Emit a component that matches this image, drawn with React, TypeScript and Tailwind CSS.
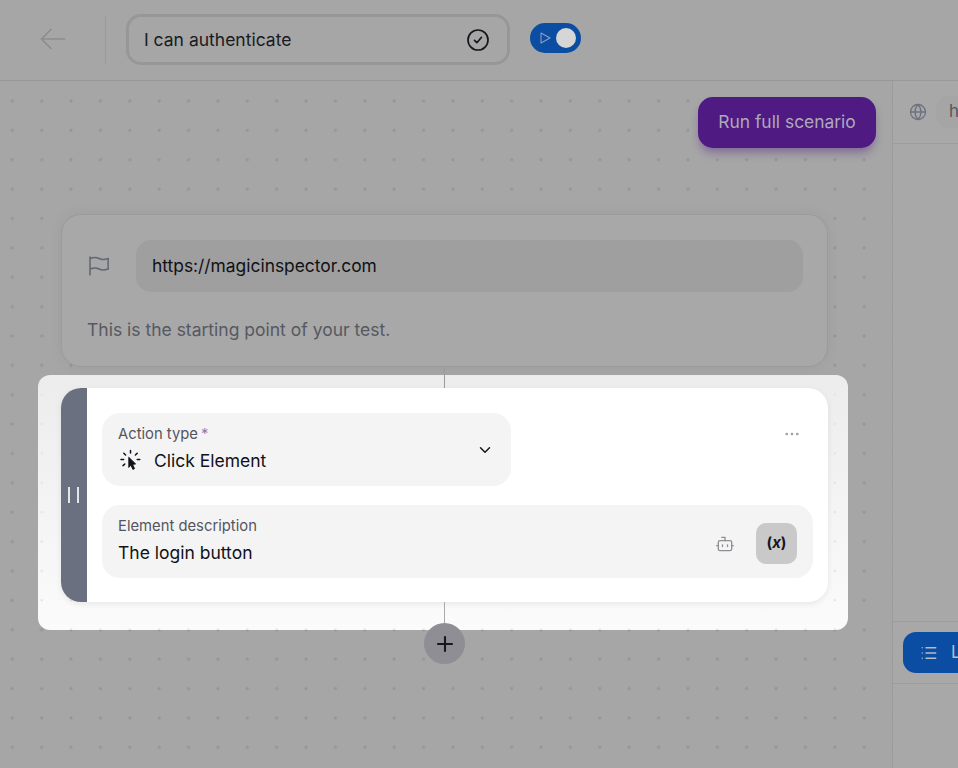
import { Bot, ChevronDown, Ellipsis, Globe, List, Plus } from 'lucide-react';
import { HiOutlineFlag } from 'react-icons/hi2';

// no icon in the packages has this exact cursor with rays
function ClickIcon() {
  return (
    <svg width="22" height="24" viewBox="0 0 22 24" fill="none" stroke="#111118" strokeWidth="1.5" strokeLinecap="round" className="shrink-0 ml-[2px]">
      <path d="M10.5 1.5v2.6M3.8 4.2l1.8 1.8M17.2 4.2l-1.8 1.8M1 10.5h2.6M4.8 15l-1.8 1.6M17.2 10.5h2.6" />
      <path d="M9 8.5l6.6 6.4-3 .5 1.9 4.2-1.6.8-2-4.3-1.9 2.1z" fill="#111118" strokeWidth="0.9" strokeLinejoin="round" />
    </svg>
  );
}

function CheckCircle() {
  return (
    <svg width="24" height="24" viewBox="0 0 24 24" fill="none" stroke="#17171c" strokeWidth="1.7" strokeLinecap="round" strokeLinejoin="round">
      <circle cx="12" cy="12" r="10" />
      <path d="M8.5 12.3l2.4 2.4 4.6-5.4" />
    </svg>
  );
}

export default function App() {
  return (
    <div className="h-[768px] w-[958px] overflow-hidden bg-[#a6a6a6] font-['Inter',sans-serif] flex flex-col">
      {/* Top bar */}
      <header className="h-[81px] shrink-0 flex items-center border-b border-[#97979c]">
        <div className="w-[106px] h-[50px] mb-[1px] flex items-center border-r border-[#9a9a9e] pl-[40px]">
          <svg width="26" height="22" viewBox="0 0 26 22" fill="none" stroke="#8c8c92" strokeWidth="1.7" strokeLinecap="round" strokeLinejoin="round" className="-mt-[1px]">
            <path d="M1.5 11h23M11 1.5L1.5 11l9.5 9.5" />
          </svg>
        </div>
        <div className="ml-[20px] mb-[1px] w-[384px] h-[51px] rounded-[15px] border-[3px] border-[#979797] flex items-center justify-between pl-[15px] pr-[17px]">
          <span className="pt-[2px] text-[17.5px] text-[#1a1a20]">I can authenticate</span>
          <CheckCircle />
        </div>
        <div className="ml-[20px] mb-[4px] w-[51px] h-[30px] rounded-full bg-[#0b4da2] flex items-center justify-between pl-[9px] pr-[5px]">
          <svg width="13" height="14" viewBox="0 0 13 14" fill="none" stroke="#8d9cc0" strokeWidth="1.1" strokeLinejoin="round">
            <path d="M2 2l9 5-9 5z" />
          </svg>
          <div className="w-[20px] h-[20px] rounded-full bg-[#d6d6d6]" />
        </div>
      </header>

      <div className="flex-1 flex min-h-0">
        {/* Canvas */}
        <main className="w-[892px] shrink-0 flex flex-col bg-[radial-gradient(circle,#95959a_1.4px,transparent_1.7px)] bg-[size:29.38px_29.38px] bg-[position:-2.4px_5.3px]">
          <button className="self-end mt-[16px] mr-[16px] w-[178px] h-[51px] rounded-[15px] bg-[#4f1a82] text-[#aea8b9] text-[17.4px] shadow-[0_6px_10px_-2px_rgba(79,26,130,0.45)]">
            Run full scenario
          </button>

          <section className="relative mt-[66px] ml-[61px] w-[767px] h-[153px] rounded-[20px] bg-[#a8a8a8] border border-[#9b9b9b] shadow-[0_0_14px_rgba(0,0,0,0.06)] px-[25px] pt-[25px]">
            <div className="flex items-center gap-[25px]">
              <HiOutlineFlag size={24} className="text-[#62666f] shrink-0" />
              <div className="w-[667px] h-[52px] shrink-0 rounded-[15px] bg-[#9f9f9f] flex items-center pl-[16px] text-[17.4px] text-[#111116]">
                https://magicinspector.com
              </div>
            </div>
            <p className="mt-[26px] text-[17.5px] leading-[24px] text-[#565862]">This is the starting point of your test.</p>
          </section>

          {/* Highlighted step */}
          <div className="relative mt-[8px] ml-[38px] w-[810px] h-[255px] rounded-[12px] bg-[radial-gradient(circle,#e4e4e4_1.3px,transparent_1.6px),linear-gradient(to_bottom,#ececec,#fbfbfb)] bg-[size:29.38px_29.38px,100%_100%] bg-[position:-11px_4.9px,0_0] pt-[13px] pl-[23px]">
            <div className="absolute left-[406px] -top-[8px] w-px h-[21px] bg-[#9a9a9a]" />
            <div className="absolute left-[406px] top-[227px] w-px h-[22px] bg-[#a9a9a9]" />
            <div className="w-[767px] h-[214px] rounded-[20px] bg-white shadow-[0_2px_6px_rgba(0,0,0,0.08)] flex overflow-hidden">
              <div className="w-[26px] shrink-0 bg-[#6b7080] flex items-center justify-center gap-[7px] pb-[1px] pr-[1px]">
                <div className="w-[2px] h-[16px] bg-[#e4e5e9]" />
                <div className="w-[2px] h-[16px] bg-[#e4e5e9]" />
              </div>
              <div className="flex-1 pl-[15px] pr-[15px] pt-[25px]">
                <div className="flex items-start justify-between">
                  <div className="w-[409px] h-[73px] rounded-[18px] bg-[#f4f4f5] flex items-center justify-between pl-[16px] pr-[17px]">
                    <div className="mb-[2px]">
                      <div className="text-[14.8px] leading-[20px] text-[#54545e]">
                        Action type<span className="ml-[3px] text-[#9a7bb5]">*</span>
                      </div>
                      <div className="flex items-center gap-[12px] mt-[4px] text-[17.5px] leading-[26px] text-[#111116]">
                        <ClickIcon />
                        Click Element
                      </div>
                    </div>
                    <ChevronDown size={18} strokeWidth={2} className="text-[#17171c]" />
                  </div>
                  <Ellipsis size={18} strokeWidth={1.6} className="text-[#9e9ea4] mt-[12px] mr-[12px]" />
                </div>
                <div className="mt-[19px] h-[73px] rounded-[18px] bg-[#f4f4f5] flex items-center justify-between pl-[16px] pr-[16px]">
                  <div className="mb-[2px]">
                    <div className="text-[14.8px] leading-[20px] text-[#54545e]">Element description</div>
                    <div className="mt-[4px] text-[17.5px] leading-[26px] text-[#111116]">The login button</div>
                  </div>
                  <div className="flex items-center gap-[21px] mt-[4px]">
                    <Bot size={20} strokeWidth={1.6} className="text-[#8e8e94]" />
                    <div className="w-[41px] h-[41px] rounded-[10px] bg-[#c9c9c9] flex items-center justify-center text-[15px] font-bold text-[#17171c]">
                      (<span className="italic">x</span>)
                    </div>
                  </div>
                </div>
              </div>
            </div>
            <div className="absolute left-[386px] top-[248px] w-[41px] h-[41px] rounded-full bg-[#8e8e94] flex items-center justify-center">
              <Plus size={24} strokeWidth={2.1} className="text-[#17171c]" />
            </div>
          </div>
        </main>

        {/* Right panel */}
        <aside className="flex-1 min-w-0 bg-[#a8a8a8] border-l border-[#9b9b9b] flex flex-col overflow-hidden">
          <div className="h-[63px] shrink-0 border-b border-[#9d9d9d] flex items-center pl-[16px]">
            <Globe size={18} strokeWidth={1.7} className="shrink-0 text-[#6d7180]" />
            <div className="ml-[9px] h-[32px] w-[40px] shrink-0 rounded-l-[12px] bg-[#a5a5a5] flex items-center pl-[13px] text-[17px] text-[#55555e]">h</div>
          </div>
          <div className="h-[477px] shrink-0" />
          <div className="h-[63px] shrink-0 border-y border-[#9d9d9d] flex items-center pl-[10px]">
            <div className="w-[70px] h-[41px] shrink-0 rounded-l-[13px] bg-[#0b4da2] flex items-center pl-[17px] gap-[13px] text-[17px] text-[#b7bccb]">
              <List size={18} strokeWidth={1.8} className="shrink-0" />
              L
            </div>
          </div>
        </aside>
      </div>
    </div>
  );
}
